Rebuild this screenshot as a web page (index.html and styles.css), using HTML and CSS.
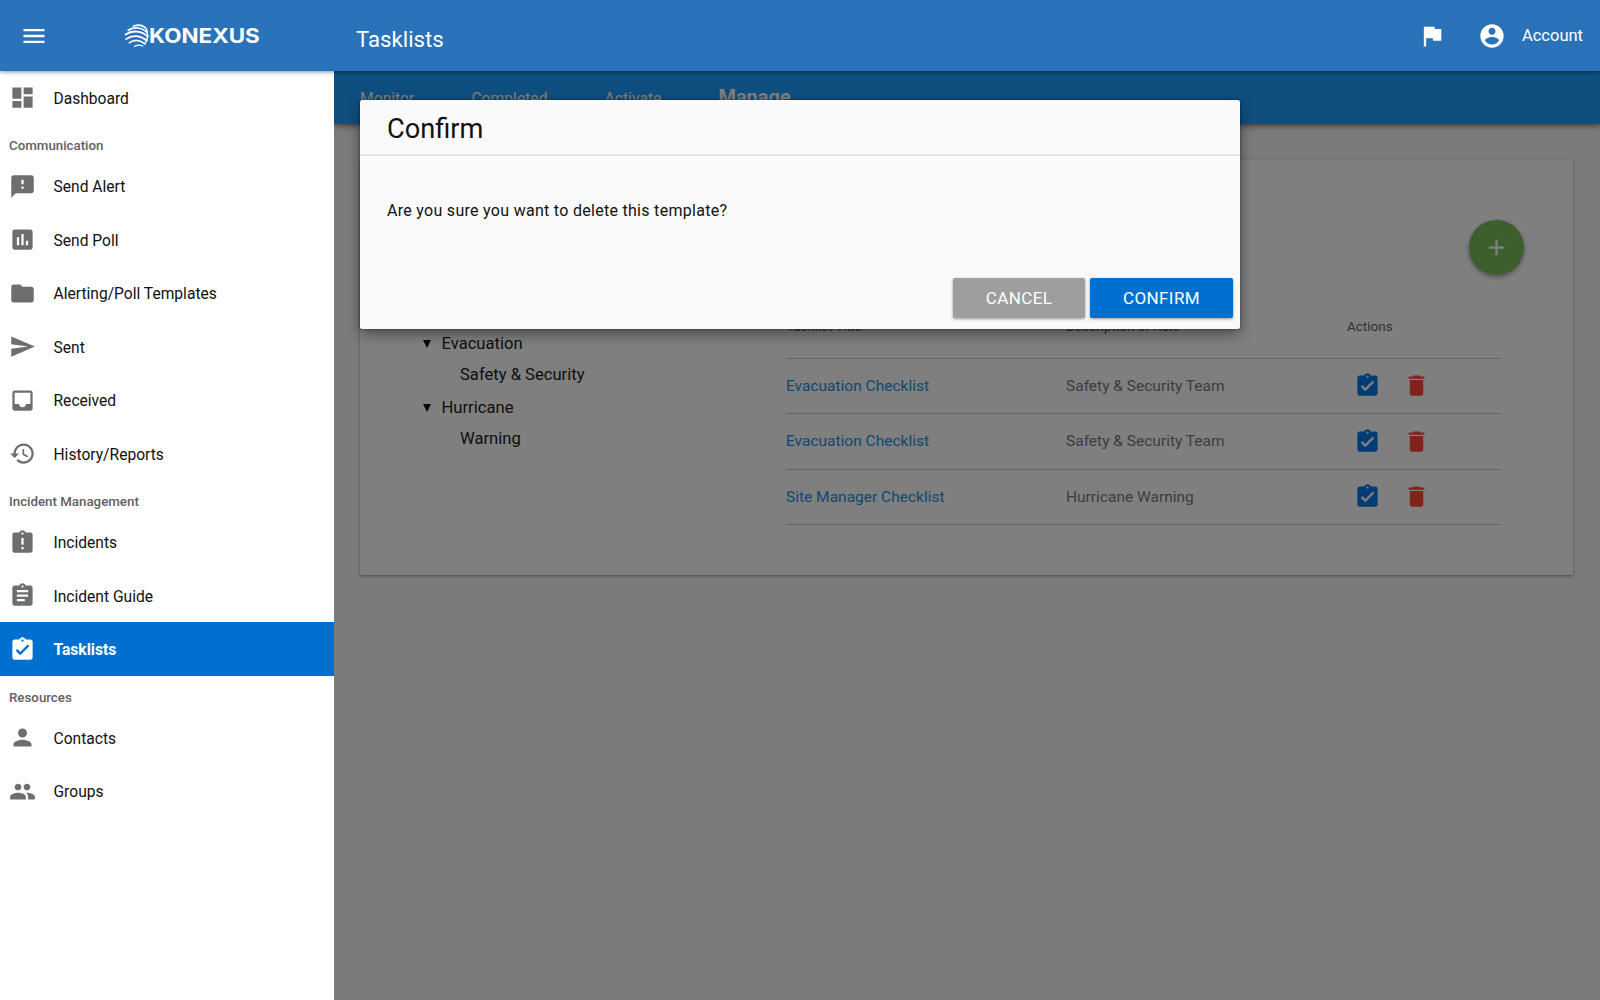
FILE: index.html
```html
<!DOCTYPE html>
<html lang="en">
<head>
<meta charset="utf-8">
<title>Tasklists</title>
<link rel="stylesheet" href="styles.css">
</head>
<body>
<svg class="defs" width="0" height="0" aria-hidden="true">
  <symbol id="i-task" viewBox="0 0 24 24"><path d="M19 3h-4.18C14.4 1.84 13.3 1 12 1c-1.3 0-2.4.84-2.82 2H5c-1.1 0-2 .9-2 2v14c0 1.1.9 2 2 2h14c1.1 0 2-.9 2-2V5c0-1.1-.9-2-2-2zm-7 0c.55 0 1 .45 1 1s-.45 1-1 1-1-.45-1-1 .45-1 1-1zm-2 14l-4-4 1.41-1.41L10 14.17l6.59-6.59L18 9l-8 8z"/></symbol>
  <symbol id="i-delete" viewBox="0 0 24 24"><path d="M6 19c0 1.1.9 2 2 2h8c1.1 0 2-.9 2-2V7H6v12zM19 4h-3.5l-1-1h-5l-1 1H5v2h14V4z"/></symbol>
</svg>
<div class="app">
  <header class="topbar">
    <div class="brand">
      <svg class="icon menu" viewBox="0 0 24 24"><path d="M3 18h18v-2H3v2zm0-5h18v-2H3v2zm0-7v2h18V6H3z"/></svg>
      <div class="logo">
        <svg class="globe" viewBox="0 0 24 24" fill="none" stroke="#fff" stroke-linecap="round">
          <path stroke-width="1.5" d="M9 3C13 1.5 18 2 21 5"/>
          <path stroke-width="1.6" d="M4 7C10 3.5 17 4 22 9"/>
          <path stroke-width="1.7" d="M1.5 11C8 6.5 17 7.5 23 13"/>
          <path stroke-width="1.7" d="M2 15.5C8 11 16 12 22 17"/>
          <path stroke-width="1.5" d="M5 19C10 15.5 15 16 20 20"/>
          <path stroke-width="1.2" d="M10 22.5C13 20.5 15.5 21 18 22"/>
          <path stroke-width="1.3" d="M21 5C23.5 9 23.5 15 20 20"/>
        </svg>
        <span class="wordmark">KONEXUS</span>
      </div>
    </div>
    <h1 class="page-title">Tasklists</h1>
    <div class="top-actions">
      <svg class="icon flag" viewBox="0 0 24 24"><path d="M14.4 6L14 4H5v17h2v-7h5.6l.4 2h7V6z"/></svg>
      <svg class="icon avatar" viewBox="0 0 24 24"><path d="M12 2C6.48 2 2 6.48 2 12s4.48 10 10 10 10-4.48 10-10S17.52 2 12 2zm0 3c1.66 0 3 1.34 3 3s-1.34 3-3 3-3-1.34-3-3 1.34-3 3-3zm0 14.2c-2.5 0-4.71-1.28-6-3.22.03-1.99 4-3.08 6-3.08 1.99 0 5.97 1.09 6 3.08-1.29 1.94-3.5 3.22-6 3.22z"/></svg>
      <span class="account">Account</span>
    </div>
  </header>

  <nav class="sidebar">
    <a class="nav-item"><svg class="icon" viewBox="0 0 24 24"><path d="M3 13h8V3H3v10zm0 8h8v-6H3v6zm10 0h8V11h-8v10zm0-18v6h8V3h-8z"/></svg><span>Dashboard</span></a>
    <div class="nav-label">Communication</div>
    <a class="nav-item"><svg class="icon" viewBox="0 0 24 24"><path d="M20 2H4c-1.1 0-1.99.9-1.99 2L2 22l4-4h14c1.1 0 2-.9 2-2V4c0-1.1-.9-2-2-2zm-7 12h-2v-2h2v2zm0-4h-2V6h2v4z"/></svg><span>Send Alert</span></a>
    <a class="nav-item"><svg class="icon" viewBox="0 0 24 24"><path d="M19 3H5c-1.1 0-2 .9-2 2v14c0 1.1.9 2 2 2h14c1.1 0 2-.9 2-2V5c0-1.1-.9-2-2-2zM9 17H7v-7h2v7zm4 0h-2V7h2v10zm4 0h-2v-4h2v4z"/></svg><span>Send Poll</span></a>
    <a class="nav-item"><svg class="icon" viewBox="0 0 24 24"><path d="M10 4H4c-1.1 0-1.99.9-1.99 2L2 18c0 1.1.9 2 2 2h16c1.1 0 2-.9 2-2V8c0-1.1-.9-2-2-2h-8l-2-2z"/></svg><span>Alerting/Poll Templates</span></a>
    <a class="nav-item"><svg class="icon" viewBox="0 0 24 24"><path d="M2.01 21L23 12 2.01 3 2 10l15 2-15 2z"/></svg><span>Sent</span></a>
    <a class="nav-item"><svg class="icon" viewBox="0 0 24 24"><path d="M19 3H4.99c-1.11 0-1.98.89-1.98 2L3 19c0 1.1.88 2 1.99 2H19c1.1 0 2-.9 2-2V5c0-1.11-.9-2-2-2zm0 12h-4c0 1.66-1.35 3-3 3s-3-1.34-3-3H4.99V5H19v10z"/></svg><span>Received</span></a>
    <a class="nav-item"><svg class="icon" viewBox="0 0 24 24"><path d="M13 3c-4.97 0-9 4.03-9 9H1l3.89 3.89.07.14L9 12H6c0-3.87 3.13-7 7-7s7 3.13 7 7-3.13 7-7 7c-1.93 0-3.68-.79-4.94-2.06l-1.42 1.42C8.27 19.99 10.51 21 13 21c4.97 0 9-4.03 9-9s-4.03-9-9-9zm-1 5v5l4.28 2.54.72-1.21-3.5-2.08V8H12z"/></svg><span>History/Reports</span></a>
    <div class="nav-label">Incident Management</div>
    <a class="nav-item"><svg class="icon" viewBox="0 0 24 24"><path d="M19 3h-4.18C14.4 1.84 13.3 1 12 1c-1.3 0-2.4.84-2.82 2H5c-1.1 0-2 .9-2 2v14c0 1.1.9 2 2 2h14c1.1 0 2-.9 2-2V5c0-1.1-.9-2-2-2zm-6 15h-2v-2h2v2zm0-4h-2V8h2v6zm-1-9c-.55 0-1-.45-1-1s.45-1 1-1 1 .45 1 1-.45 1-1 1z"/></svg><span>Incidents</span></a>
    <a class="nav-item"><svg class="icon" viewBox="0 0 24 24"><path d="M19 3h-4.18C14.4 1.84 13.3 1 12 1c-1.3 0-2.4.84-2.82 2H5c-1.1 0-2 .9-2 2v14c0 1.1.9 2 2 2h14c1.1 0 2-.9 2-2V5c0-1.1-.9-2-2-2zm-7 0c.55 0 1 .45 1 1s-.45 1-1 1-1-.45-1-1 .45-1 1-1zm2 14H7v-2h7v2zm3-4H7v-2h10v2zm0-4H7V7h10v2z"/></svg><span>Incident Guide</span></a>
    <a class="nav-item active"><svg class="icon"><use href="#i-task"/></svg><span>Tasklists</span></a>
    <div class="nav-label">Resources</div>
    <a class="nav-item"><svg class="icon" viewBox="0 0 24 24"><path d="M12 12c2.21 0 4-1.79 4-4s-1.79-4-4-4-4 1.79-4 4 1.79 4 4 4zm0 2c-2.67 0-8 1.34-8 4v2h16v-2c0-2.66-5.33-4-8-4z"/></svg><span>Contacts</span></a>
    <a class="nav-item"><svg class="icon" viewBox="0 0 24 24"><path d="M16 11c1.66 0 2.99-1.34 2.99-3S17.66 5 16 5c-1.66 0-3 1.34-3 3s1.34 3 3 3zm-8 0c1.66 0 2.99-1.34 2.99-3S9.66 5 8 5C6.34 5 5 6.34 5 8s1.34 3 3 3zm0 2c-2.33 0-7 1.17-7 3.5V19h14v-2.5c0-2.33-4.67-3.5-7-3.5zm8 0c-.29 0-.62.02-.97.05 1.16.84 1.97 1.97 1.97 3.45V19h6v-2.5c0-2.33-4.67-3.5-7-3.5z"/></svg><span>Groups</span></a>
  </nav>

  <main class="main">
    <div class="tabs">
      <span class="tab">Monitor</span>
      <span class="tab">Completed</span>
      <span class="tab">Activate</span>
      <span class="tab tab-current">Manage</span>
    </div>
    <section class="card">
      <button class="fab" type="button"><svg viewBox="0 0 24 24"><path d="M19 13h-6v6h-2v-6H5v-2h6V5h2v6h6v2z"/></svg></button>
      <ul class="tree">
        <li class="tree-parent"><i class="caret"></i>Evacuation</li>
        <li class="tree-child">Safety &amp; Security</li>
        <li class="tree-parent"><i class="caret"></i>Hurricane</li>
        <li class="tree-child">Warning</li>
      </ul>
      <table class="list">
        <thead>
          <tr><th class="col-title">Tasklist Title</th><th class="col-desc">Description or Role</th><th>Actions</th></tr>
        </thead>
        <tbody>
          <tr><td><a class="link">Evacuation Checklist</a></td><td>Safety &amp; Security Team</td><td><div class="row-actions"><svg class="icon act-task"><use href="#i-task"/></svg><svg class="icon act-delete"><use href="#i-delete"/></svg></div></td></tr>
          <tr><td><a class="link">Evacuation Checklist</a></td><td>Safety &amp; Security Team</td><td><div class="row-actions"><svg class="icon act-task"><use href="#i-task"/></svg><svg class="icon act-delete"><use href="#i-delete"/></svg></div></td></tr>
          <tr><td><a class="link">Site Manager Checklist</a></td><td>Hurricane Warning</td><td><div class="row-actions"><svg class="icon act-task"><use href="#i-task"/></svg><svg class="icon act-delete"><use href="#i-delete"/></svg></div></td></tr>
        </tbody>
      </table>
    </section>
    <div class="scrim"></div>
    <div class="dialog" role="dialog">
      <h2 class="dialog-title">Confirm</h2>
      <p class="dialog-body">Are you sure you want to delete this template?</p>
      <div class="dialog-actions">
        <button class="btn btn-cancel" type="button">CANCEL</button>
        <button class="btn btn-confirm" type="button">CONFIRM</button>
      </div>
    </div>
  </main>
</div>
</body>
</html>
```
FILE: styles.css
```css
* { box-sizing: border-box; }
html, body { margin: 0; height: 100%; }
body { font-family: Roboto, "Liberation Sans", sans-serif; color: #212121; background: #fff; overflow: hidden; }
.defs { position: absolute; }
.app { display: grid; grid-template-columns: 334px 1fr; grid-template-rows: 71px 1fr; height: 100vh; }
.icon { display: block; width: 27px; height: 27px; flex: none; fill: currentColor; }

/* top bar */
.topbar { grid-column: 1 / -1; display: flex; align-items: center; background: #2a72ba; color: #fff; position: relative; z-index: 5; box-shadow: 0 1px 4px rgba(0,0,0,.45); }
.brand { width: 356px; flex: none; display: flex; align-items: center; padding-left: 20px; }
.menu { width: 28px; height: 28px; }
.logo { display: flex; align-items: center; margin-left: 76px; }
.globe { width: 25px; height: 25px; flex: none; }
.wordmark { display: block; font-family: Inter, "Liberation Sans", sans-serif; font-weight: 700; font-size: 20px; line-height: 1; transform: scaleX(1.12); transform-origin: left center; }
.page-title { margin: 8px 0 0; font-size: 22.2px; font-weight: 400; line-height: 1; }
.top-actions { margin-left: auto; display: flex; align-items: center; padding-right: 17px; }
.flag { width: 28px; height: 28px; }
.avatar { width: 28px; height: 28px; margin-left: 32px; }
.account { margin: 2px 0 0 16px; font-size: 16.5px; line-height: 1; }

/* sidebar */
.sidebar { background: #fff; position: relative; z-index: 4; display: flex; flex-direction: column; }
.nav-item { display: flex; align-items: center; height: 53.45px; padding-left: 9px; font-size: 15.6px; font-weight: 400; color: #111; gap: 17.5px; flex: none; }
.nav-item span { padding-top: 2px; }
.nav-item .icon { color: #6e6e6e; }
.nav-item.active { background: #0070d0; color: #fff; font-weight: 700; }
.nav-item.active .icon { color: #fff; }
.nav-label { height: 35.2px; flex: none; padding: 14px 0 0 9px; font-size: 13.3px; line-height: 16px; font-weight: 500; color: #616161; }

/* main */
.main { position: relative; background: #f7f7f7; overflow: hidden; display: flex; flex-direction: column; }
.tabs { display: flex; align-items: center; gap: 57px; height: 53px; flex: none; padding: 2px 0 0 26px; background: #1f9fff; color: #fff; font-size: 15.7px; box-shadow: 0 2px 6px rgba(0,0,0,.5); }
.tab-current { font-size: 20px; font-weight: 700; margin-bottom: 3px; }

.card { position: relative; margin: 36px 27px 0 26px; height: 415px; flex: none; background: #fff; border-radius: 2px; box-shadow: 0 1px 3px rgba(0,0,0,.4); display: flex; padding-top: 136px; }
.fab { position: absolute; top: 60px; right: 49px; width: 55px; height: 55px; border: 0; border-radius: 50%; padding: 14px; background: #7abe58; box-shadow: 0 2px 5px rgba(0,0,0,.4); }
.fab svg { display: block; width: 27px; height: 27px; fill: #fff; }

.tree { list-style: none; margin: 31.6px 0 0; padding: 0; width: 426px; flex: none; font-size: 16.6px; color: #202020; }
.tree li { height: 32px; line-height: 32px; }
.tree-parent { display: flex; align-items: center; padding-left: 63px; gap: 10.5px; }
.caret { display: block; width: 0; height: 0; border-left: 4.5px solid transparent; border-right: 4.5px solid transparent; border-top: 8px solid #111; }
.tree .tree-child { padding-left: 100px; line-height: 30px; }

.list { width: 715px; height: 229px; border-collapse: collapse; table-layout: fixed; font-size: 15.5px; color: #7a7a7a; align-self: flex-start; }
.list th { height: 62px; padding: 0 0 24px; text-align: left; font-size: 13.5px; font-weight: 400; line-height: 16px; color: #666; border-bottom: 1.5px solid #c8c8c8; vertical-align: bottom; }
.col-title { width: 280px; }
.col-desc { width: 281px; }
.list td { height: 55.5px; padding: 0; border-bottom: 1.5px solid #c8c8c8; }
.link { color: #1e90e0; }
.row-actions { display: flex; align-items: center; gap: 21.5px; padding-left: 7px; }
.act-task { color: #0678e8; }
.act-delete { color: #ff4636; }

/* overlay + dialog */
.scrim { position: absolute; inset: 0; background: rgba(0,0,0,.5); }
.dialog { position: absolute; top: 29px; left: 26px; width: 880px; height: 229px; background: #fafafa; border-radius: 2px; box-shadow: 0 4px 14px rgba(0,0,0,.45), 0 0 2px rgba(0,0,0,.6); display: flex; flex-direction: column; }
.dialog-title { margin: 0; height: 56px; flex: none; padding: 2px 0 0 27px; font-size: 27.2px; font-weight: 400; line-height: 54px; color: #111; border-bottom: 2px solid #e4e4e4; }
.dialog-body { margin: 0; flex: 1; padding: 45px 27px 0; font-size: 16px; line-height: 20px; color: #111; letter-spacing: .29px; }
.dialog-actions { display: flex; justify-content: flex-end; gap: 5px; padding: 0 7px 11px; }
.btn { height: 40px; border: 0; border-radius: 2px; color: #fff; font-family: Roboto, "Liberation Sans", sans-serif; font-size: 17px; font-weight: 400; letter-spacing: .4px; padding: 0 0 1px; box-shadow: 0 1px 3px rgba(0,0,0,.4); }
.btn-cancel { width: 132px; background: #9e9e9e; }
.btn-confirm { width: 143px; background: #0070d0; }
```
